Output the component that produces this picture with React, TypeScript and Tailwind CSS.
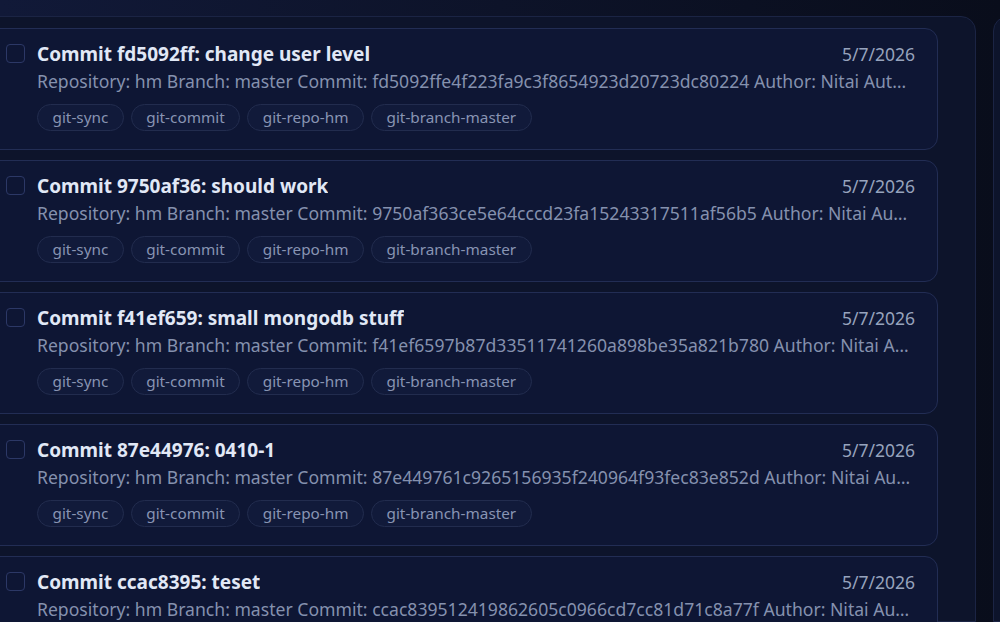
import React from "react";

type Commit = { short: string; msg: string; full: string };

const commits: Commit[] = [
  { short: "fd5092ff", msg: "change user level", full: "fd5092ffe4f223fa9c3f8654923d20723dc80224" },
  { short: "9750af36", msg: "should work", full: "9750af363ce5e64cccd23fa15243317511af56b5" },
  { short: "f41ef659", msg: "small mongodb stuff", full: "f41ef6597b87d33511741260a898be35a821b780" },
  { short: "87e44976", msg: "0410-1", full: "87e449761c9265156935f240964f93fec83e852d" },
  { short: "ccac8395", msg: "teset", full: "ccac839512419862605c0966cd7cc81d71c8a77f" },
];

const tags = ["git-sync", "git-commit", "git-repo-hm", "git-branch-master"];

function Card({ c }: { c: Commit }) {
  return (
    <div className="shrink-0 rounded-[13px] border border-[#222d54] bg-[#0e1634] pl-[19px] pr-[22px] pt-[11px] pb-[18px]">
      <div className="flex items-start gap-3">
        <div className="mt-[4px] h-[19px] w-[19px] shrink-0 rounded-[4px] border-[1.5px] border-[#2c3866]" />
        <div className="min-w-0 flex-1">
          <div className="flex items-center justify-between gap-4">
            <div className="truncate text-[19px] font-bold leading-[28px] text-[#e1e8f6]">
              Commit {c.short}: {c.msg}
            </div>
            <div className="shrink-0 text-[17.5px] leading-[28px] text-[#97a3bd]">5/7/2026</div>
          </div>
          <div className="mt-[1px] truncate pr-[3px] text-[17.6px] leading-[25px] text-[#8591ae]">
            Repository: hm Branch: master Commit: {c.full} Author: Nitai Automation Date: 2026-05-07
          </div>
          <div className="mt-[10px] flex gap-[7px]">
            {tags.map((t) => (
              <span
                key={t}
                className="flex h-[27px] items-center rounded-full border border-[#222c4e] bg-[#111a3a] px-[14.5px] text-[15.3px] text-[#8894b3]"
              >
                {t}
              </span>
            ))}
          </div>
        </div>
      </div>
    </div>
  );
}

export default function App() {
  return (
    <div
      className="flex h-[622px] w-[1000px] overflow-hidden bg-gradient-to-r from-[#111938] via-[#0d1329] to-[#090d1b] pt-[16px]"
      style={{ fontFamily: '"Noto Sans", "Open Sans", sans-serif' }}
    >
      <div className="ml-[-26px] flex w-[1002px] shrink-0 flex-col gap-[10px] rounded-t-[15px] border border-[#1b2444] bg-[#0d142b] pl-[11px] pr-[37px] pt-[11px]">
        {commits.map((c) => (
          <Card key={c.short} c={c} />
        ))}
      </div>
      <div className="ml-[17px] w-[200px] shrink-0 rounded-t-[15px] border border-[#1b2444] bg-[#0d142b]" />
    </div>
  );
}
